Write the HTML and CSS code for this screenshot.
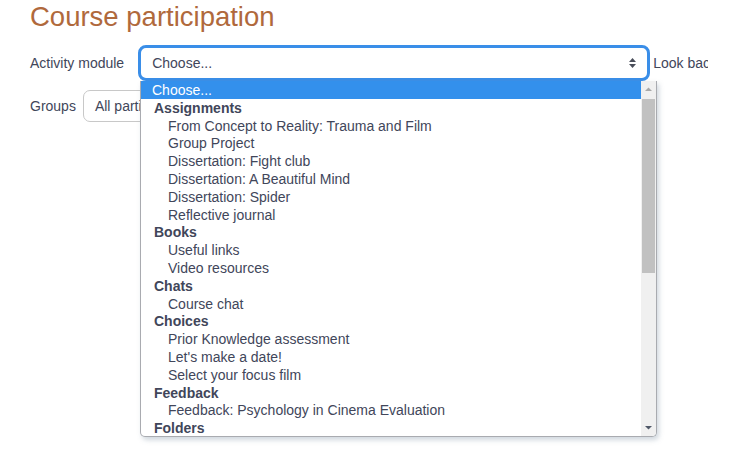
FILE: index.html
```html
<!DOCTYPE html>
<html>
<head>
<meta charset="utf-8">
<link rel="stylesheet" href="styles.css">
</head>
<body>
<div class="page">
  <h2 class="title">Course participation</h2>
  <div class="row row-first">
    <span class="label">Activity module</span>
    <div class="select select-focus">
      <span>Choose...</span>
      <svg class="caret" width="9" height="12" viewBox="0 0 9 12"><path d="M4.5 1 L8 5 L1 5 Z M1 7 L8 7 L4.5 11 Z" fill="#4a4e5a"/></svg>
    </div>
    <span class="label after">Look back</span>
  </div>
  <div class="row row-second">
    <span class="label">Groups</span>
    <div class="select select-plain"><span>All participants</span></div>
  </div>
</div>
<div class="dropdown">
  <div class="list">
    <div class="opt active">Choose...</div>
    <div class="grp">Assignments</div>
    <div class="opt sub">From Concept to Reality: Trauma and Film</div>
    <div class="opt sub">Group Project</div>
    <div class="opt sub">Dissertation: Fight club</div>
    <div class="opt sub">Dissertation: A Beautiful Mind</div>
    <div class="opt sub">Dissertation: Spider</div>
    <div class="opt sub">Reflective journal</div>
    <div class="grp">Books</div>
    <div class="opt sub">Useful links</div>
    <div class="opt sub">Video resources</div>
    <div class="grp">Chats</div>
    <div class="opt sub">Course chat</div>
    <div class="grp">Choices</div>
    <div class="opt sub">Prior Knowledge assessment</div>
    <div class="opt sub">Let's make a date!</div>
    <div class="opt sub">Select your focus film</div>
    <div class="grp">Feedback</div>
    <div class="opt sub">Feedback: Psychology in Cinema Evaluation</div>
    <div class="grp">Folders</div>
  </div>
  <div class="scrollbar">
    <svg class="arrow" width="15" height="16" viewBox="0 0 15 16"><path d="M4 10 L11 10 L7.5 6.5 Z" fill="#a8a8a8"/></svg>
    <div class="track"><div class="thumb"></div></div>
    <svg class="arrow" width="15" height="16" viewBox="0 0 15 16"><path d="M4 6 L11 6 L7.5 9.5 Z" fill="#505868"/></svg>
  </div>
</div>
</body>
</html>
```
FILE: styles.css
```css
html, body {
  margin: 0;
  padding: 0;
  background: #ffffff;
}
body {
  font-family: "Liberation Sans", Arial, sans-serif;
  color: #41465a;
  font-size: 14px;
}
.page {
  width: 678px;
  padding-left: 30px;
  overflow: hidden;
}
.title {
  margin: 0;
  font-size: 27.5px;
  line-height: 33px;
  font-weight: normal;
  color: #b0693c;
}
.row {
  display: flex;
  align-items: center;
  white-space: nowrap;
}
.row-first {
  margin-top: 12px;
}
.row-second {
  margin-top: 9px;
}
.label {
  line-height: 18px;
  flex: none;
}
.after {
  margin-left: 3px;
}
.select {
  box-sizing: border-box;
  display: flex;
  align-items: center;
  flex: none;
  background: #fff;
}
.select-focus {
  margin-left: 14px;
  width: 512px;
  height: 36px;
  border: 3px solid #3a8ee8;
  border-radius: 8px;
  padding-left: 11px;
  padding-right: 10px;
  justify-content: space-between;
}
.select-plain {
  margin-left: 7px;
  width: 330px;
  height: 32px;
  border: 1px solid #c8c8c8;
  border-radius: 7px;
  padding-left: 11px;
}
.caret {
  display: block;
}
.dropdown {
  position: absolute;
  left: 140px;
  top: 81px;
  width: 517px;
  height: 356px;
  box-sizing: border-box;
  border: 1px solid #a9abb0;
  border-top: none;
  border-radius: 0 0 5px 5px;
  background: #fff;
  box-shadow: 2px 3px 5px rgba(120, 140, 160, 0.35);
  display: flex;
  overflow: hidden;
}
.list {
  flex: 1;
  overflow: hidden;
}
.opt, .grp {
  box-sizing: border-box;
  height: 17.8px;
  padding-top: 1px;
  line-height: 17px;
  white-space: nowrap;
}
.opt {
  padding-left: 11px;
}
.opt.sub {
  padding-left: 27px;
}
.grp {
  padding-left: 13px;
  font-weight: bold;
}
.active {
  background: #3390ec;
  color: #ffffff;
}
.scrollbar {
  width: 15px;
  flex: none;
  background: #f0f0f0;
  display: flex;
  flex-direction: column;
}
.arrow {
  display: block;
  flex: none;
}
.track {
  flex: 1;
  padding: 2px 1px 0 1px;
}
.thumb {
  height: 174px;
  background: #c1c1c1;
}
```
